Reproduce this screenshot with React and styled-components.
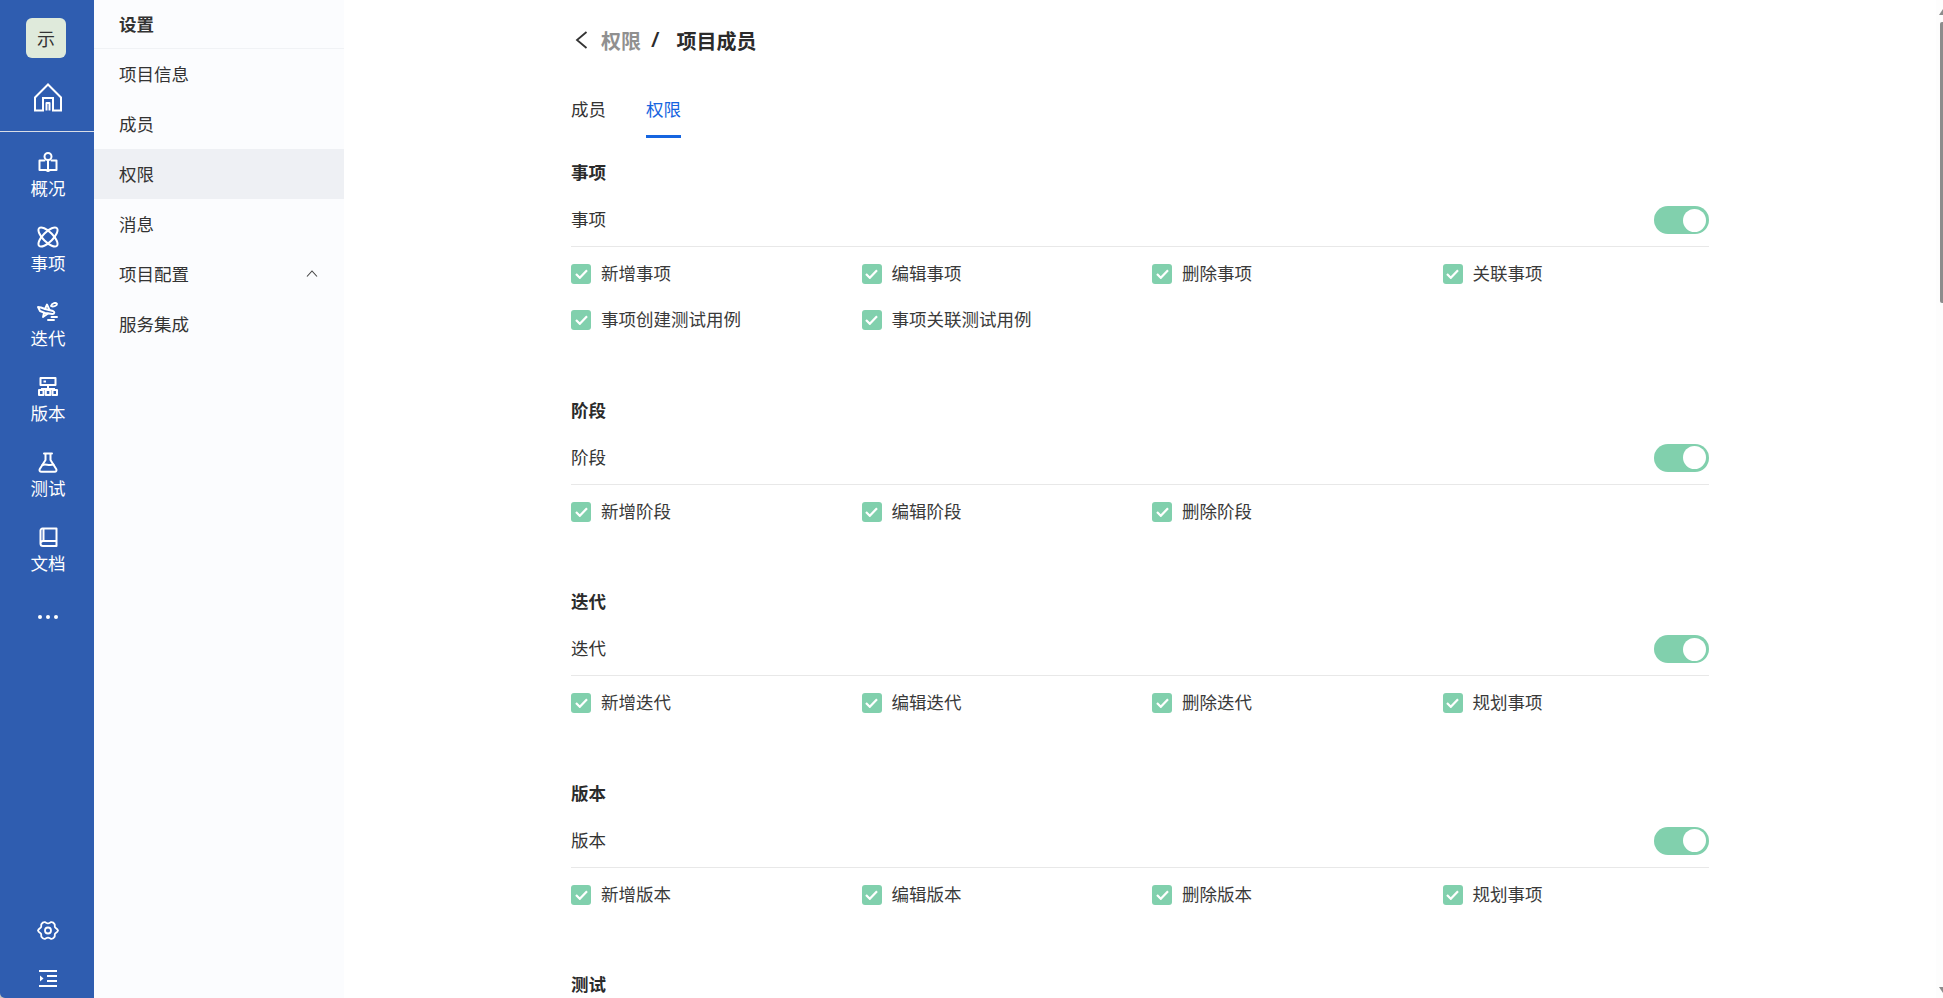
import React from 'react';
import styled, { createGlobalStyle } from 'styled-components';

const GlobalStyle = createGlobalStyle`
  html, body {
    margin: 0;
    padding: 0;
    height: 100%;
    overflow: hidden;
    background: #fff;
  }
  body {
    font-family: "Noto Sans CJK SC", "Noto Sans", sans-serif;
    color: #333;
  }
  #root {
    height: 100%;
  }
`;

const Page = styled.div`
  position: relative;
  display: flex;
  height: 998px;
  overflow: hidden;
  background: #c9c6c0;
`;

const Sidebar = styled.aside`
  flex: 0 0 94px;
  display: flex;
  flex-direction: column;
  align-items: center;
  background: #2f5db0;
  color: #fff;
  border-bottom-left-radius: 5px;
`;

const Brand = styled.div`
  align-self: stretch;
  display: flex;
  flex-direction: column;
  align-items: center;
  height: 132px;
  padding-top: 18px;
  box-sizing: border-box;
  border-bottom: 1px solid #d9dde6;
`;

const Avatar = styled.div`
  width: 40px;
  height: 40px;
  margin-right: 2px;
  display: flex;
  align-items: center;
  justify-content: center;
  border-radius: 6px;
  background: #dfeadb;
  color: #333;
  font-size: 18px;
`;

const HomeLink = styled.div`
  margin-top: 25px;
  margin-left: 2px;
  height: 30px;
`;

const NavList = styled.nav`
  display: flex;
  flex-direction: column;
  align-items: center;
  padding-top: 17px;
  padding-left: 2px;
`;

const NavItem = styled.div`
  height: 75px;
  display: flex;
  flex-direction: column;
  align-items: center;
`;

const NavIcon = styled.div`
  height: 26px;
  display: flex;
  align-items: center;
  justify-content: center;
`;

const NavLabel = styled.div`
  height: 26px;
  line-height: 25px;
  font-size: 17.5px;
`;

const Dots = styled.div`
  display: flex;
  gap: 4px;
  margin-top: 16px;
`;

const Dot = styled.span`
  width: 4px;
  height: 4px;
  border-radius: 50%;
  background: #fff;
`;

const SidebarFoot = styled.div`
  margin-top: auto;
  padding-bottom: 11px;
  padding-left: 1px;
  display: flex;
  flex-direction: column;
  align-items: center;
  gap: 29px;
`;

const Menu = styled.div`
  flex: 0 0 250px;
  background: #fbfcfe;
  color: #333;
`;

const MenuTitle = styled.div`
  height: 49px;
  box-sizing: border-box;
  padding-left: 25px;
  line-height: 47px;
  font-size: 17.5px;
  font-weight: 700;
  border-bottom: 1px solid #f0f2f5;
`;

const MenuItem = styled.div`
  height: 50px;
  box-sizing: border-box;
  display: flex;
  align-items: center;
  justify-content: space-between;
  padding: 0 26px 2px 25px;
  font-size: 17.5px;
  background: ${(p) => (p.$active ? '#eef0f4' : 'transparent')};
`;

const Main = styled.main`
  flex: 1;
  min-width: 0;
  padding-left: 227px;
  background: #fff;
`;

const Content = styled.div`
  width: 1138px;
`;

const Breadcrumb = styled.div`
  height: 80px;
  display: flex;
  align-items: center;
  font-size: 20px;
  font-weight: 700;
  color: #2b2b2b;
`;

const BackIcon = styled.svg`
  width: 13px;
  height: 18px;
  margin-left: 4px;
  margin-right: 13px;
`;

const CrumbParent = styled.span`
  color: #909090;
`;

const CrumbSlash = styled.span`
  margin: 0 19px 0 11px;
  font-family: "Liberation Sans", sans-serif;
  font-style: italic;
`;

const Tabs = styled.div`
  display: flex;
  gap: 40px;
  height: 58px;
`;

const Tab = styled.div`
  height: 58px;
  box-sizing: border-box;
  line-height: 58px;
  font-size: 17.5px;
  color: ${(p) => (p.$active ? '#1565e0' : '#333')};
  border-bottom: 3px solid ${(p) => (p.$active ? '#1565e0' : 'transparent')};
`;

const Section = styled.section`
  padding-top: 19px;
  padding-bottom: 32.5px;
`;

const SectionTitle = styled.h3`
  margin: 0;
  height: 30px;
  line-height: 30px;
  font-size: 17.5px;
  font-weight: 700;
  color: #2b2b2b;
`;

const SwitchRow = styled.div`
  display: flex;
  align-items: center;
  justify-content: space-between;
  height: 60px;
  padding-top: 4px;
  box-sizing: border-box;
  border-bottom: 1px solid #e8e8e8;
  font-size: 17.5px;
`;

const Toggle = styled.div`
  width: 55px;
  height: 28px;
  margin-top: 3px;
  display: flex;
  align-items: center;
  justify-content: flex-end;
  padding-right: 3px;
  box-sizing: border-box;
  border-radius: 14px;
  background: #81d0ad;
`;

const Knob = styled.div`
  width: 23px;
  height: 23px;
  border-radius: 50%;
  background: #fff;
`;

const Grid = styled.div`
  display: grid;
  grid-template-columns: repeat(4, 290.5px);
  grid-auto-rows: 46px;
  margin-top: 4px;
`;

const Check = styled.label`
  display: flex;
  align-items: center;
  gap: 10px;
  font-size: 17.5px;
  white-space: nowrap;
  color: #3a3a3a;
`;

const CheckText = styled.span`
  line-height: 24px;
  margin-top: -2px;
`;

const Box = styled.span`
  flex: 0 0 20px;
  width: 20px;
  height: 20px;
  display: flex;
  align-items: center;
  justify-content: center;
  border-radius: 3px;
  background: #81d0ad;
`;

const ScrollTrack = styled.div`
  position: absolute;
  top: 0;
  right: 0;
  bottom: 0;
  width: 7px;
  background: #fdfdfd;
`;

const ScrollThumb = styled.div`
  position: absolute;
  top: 22px;
  right: 0;
  width: 3.5px;
  height: 281px;
  border-radius: 2px 0 0 2px;
  background: #8c8c8c;
`;

const ScrollArrow = styled.svg`
  position: absolute;
  right: 0;
  top: ${(p) => p.$top}px;
  width: 4px;
  height: 6px;
`;

const Stroke = styled.svg`
  display: block;
  fill: none;
  stroke: currentColor;
  stroke-width: ${(p) => p.$w || 2};
  stroke-linecap: round;
  stroke-linejoin: round;
`;

const HomeIcon = () => (
  <Stroke width="28" height="29" viewBox="0 0 28 29">
    <path d="M1 14.5 14 1.500l13 13V27.500H19V15H9v12.500H1z" strokeLinejoin="miter" />
    <path d="M12.500 27.500V20h3v7.500" strokeLinecap="butt" />
  </Stroke>
);

const OverviewIcon = () => (
  <Stroke width="20" height="20" viewBox="0 0 20 20">
    <circle cx="10" cy="4.500" r="3.500" />
    <path d="M6.500 8.500H1.500v9.500H8l2 1 2-1h6.500V8.500H13.500M10 8.500V18.500" />
  </Stroke>
);

const IssueIcon = () => (
  <Stroke width="22" height="22" viewBox="0 0 22 22">
    <ellipse cx="11" cy="11" rx="12.500" ry="5" transform="rotate(45 11 11)" />
    <ellipse cx="11" cy="11" rx="12.500" ry="5" transform="rotate(-45 11 11)" />
  </Stroke>
);

const PlaneIcon = () => (
  <Stroke width="22" height="20" viewBox="0 0 22 20" $w={1.900}>
    <path d="M1 5l3 .500 4 1.500 8 2c2 1 1.500 3-.5 3L8 11 3 9z" />
    <path d="M8 7l2-4.500L12.500 8M7 11l-1 4 5-3.500" />
    <path d="M14 4c1-3 5-4 6-2 0 2-4 3-6 2zM14.500 15H20M11 18h6" />
  </Stroke>
);

const VersionIcon = () => (
  <Stroke width="20" height="20" viewBox="0 0 20 20">
    <rect x="2.500" y="1" width="15" height="7" />
    <path d="M5.500 4.500H8M10 8v4M3 12h14" strokeLinecap="butt" />
    <rect x="1" y="13" width="4.500" height="5" />
    <rect x="7.800" y="13" width="4.500" height="5" />
    <rect x="14.500" y="13" width="4.500" height="5" />
  </Stroke>
);

const FlaskIcon = () => (
  <Stroke width="20" height="21" viewBox="0 0 20 21">
    <path d="M6 1.500h8M7.500 1.500V8L1.800 17c-.8 1.500 0 2.800 1.700 2.800h13c1.700 0 2.500-1.300 1.700-2.800L12.500 8V1.500" />
    <path d="M4.500 13c3-1.500 6 1 11-.500" />
  </Stroke>
);

const BookIcon = () => (
  <Stroke width="19" height="20" viewBox="0 0 19 20">
    <path d="M1.500 16.500V3.500a2 2 0 0 1 2-2h14v17.500H4a2.500 2.500 0 0 1-2.500-2.500zM1.500 16.500A2.500 2.500 0 0 1 4 14h13.500" />
    <path d="M4.500 14V2" />
  </Stroke>
);

const GearIcon = () => (
  <Stroke width="22" height="21" viewBox="0 0 22 21" $w={1.800}>
    <circle cx="11" cy="10.500" r="3" />
    <path d="M8 2.200c1 .2 1.500 1.100 3 1.100s2-.9 3-1.100c1.200-.2 3 1 3.600 2 .5 1-.2 2 .4 3 .5 1 2.400 1.300 3 3.300-.6 2-2.500 2.300-3 3.300-.6 1 .1 2-.4 3-.6 1-2.400 2.200-3.600 2-1-.2-1.500-1.100-3-1.100s-2 .9-3 1.100c-1.200.2-3-1-3.600-2-.5-1 .2-2-.4-3-.5-1-2.400-1.300-3-3.300.6-2 2.500-2.300 3-3.300.6-1-.1-2 .4-3 .6-1 2.400-2.200 3.600-2z" />
  </Stroke>
);

const IndentIcon = () => (
  <Stroke width="18" height="17" viewBox="0 0 18 17">
    <path d="M0 1h18M8 6h10M8 11h10M0 16h18" strokeLinecap="butt" />
    <path d="M1 5.500v6l3.500-3z" fill="currentColor" stroke="none" />
  </Stroke>
);

const CheckMark = () => (
  <svg width="13" height="10" viewBox="0 0 13 10" fill="none">
    <path d="M1 5l3.800 3.800L12 1.200" stroke="#fff" strokeWidth="2.200" />
  </svg>
);

const navItems = [
  { label: '概况', Icon: OverviewIcon },
  { label: '事项', Icon: IssueIcon },
  { label: '迭代', Icon: PlaneIcon },
  { label: '版本', Icon: VersionIcon },
  { label: '测试', Icon: FlaskIcon },
  { label: '文档', Icon: BookIcon },
];

const sections = [
  {
    title: '事项',
    items: ['新增事项', '编辑事项', '删除事项', '关联事项', '事项创建测试用例', '事项关联测试用例'],
  },
  { title: '阶段', items: ['新增阶段', '编辑阶段', '删除阶段'] },
  { title: '迭代', items: ['新增迭代', '编辑迭代', '删除迭代', '规划事项'] },
  { title: '版本', items: ['新增版本', '编辑版本', '删除版本', '规划事项'] },
];

function App() {
  return (
    <Page>
      <GlobalStyle />
      <Sidebar>
        <Brand>
          <Avatar>示</Avatar>
          <HomeLink>
            <HomeIcon />
          </HomeLink>
        </Brand>
        <NavList>
          {navItems.map(({ label, Icon }) => (
            <NavItem key={label}>
              <NavIcon>
                <Icon />
              </NavIcon>
              <NavLabel>{label}</NavLabel>
            </NavItem>
          ))}
          <Dots>
            <Dot />
            <Dot />
            <Dot />
          </Dots>
        </NavList>
        <SidebarFoot>
          <GearIcon />
          <IndentIcon />
        </SidebarFoot>
      </Sidebar>

      <Menu>
        <MenuTitle>设置</MenuTitle>
        <MenuItem>项目信息</MenuItem>
        <MenuItem>成员</MenuItem>
        <MenuItem $active>权限</MenuItem>
        <MenuItem>消息</MenuItem>
        <MenuItem>
          项目配置
          <svg width="12" height="7" viewBox="0 0 12 7" fill="none">
            <path d="M1 6.500 6 1l5 5.500" stroke="#444" strokeWidth="1.100" />
          </svg>
        </MenuItem>
        <MenuItem>服务集成</MenuItem>
      </Menu>

      <Main>
        <Content>
          <Breadcrumb>
            <BackIcon viewBox="0 0 13 18" fill="none">
              <path d="M11.500 1 2 9l9.500 8" stroke="#333" strokeWidth="1.800" />
            </BackIcon>
            <CrumbParent>权限</CrumbParent>
            <CrumbSlash>/</CrumbSlash>
            项目成员
          </Breadcrumb>
          <Tabs>
            <Tab>成员</Tab>
            <Tab $active>权限</Tab>
          </Tabs>
          {sections.map((section) => (
            <Section key={section.title}>
              <SectionTitle>{section.title}</SectionTitle>
              <SwitchRow>
                {section.title}
                <Toggle>
                  <Knob />
                </Toggle>
              </SwitchRow>
              <Grid>
                {section.items.map((item) => (
                  <Check key={item}>
                    <Box>
                      <CheckMark />
                    </Box>
                    <CheckText>{item}</CheckText>
                  </Check>
                ))}
              </Grid>
            </Section>
          ))}
          <Section>
            <SectionTitle>测试</SectionTitle>
          </Section>
        </Content>
      </Main>

      <ScrollTrack>
        <ScrollArrow $top={9} viewBox="0 0 4 6">
          <path d="M4 0v6H0z" fill="#8c8c8c" />
        </ScrollArrow>
        <ScrollThumb />
        <ScrollArrow $top={987} viewBox="0 0 4 6">
          <path d="M0 0h4v6z" fill="#8c8c8c" />
        </ScrollArrow>
      </ScrollTrack>
    </Page>
  );
}

export default App;
